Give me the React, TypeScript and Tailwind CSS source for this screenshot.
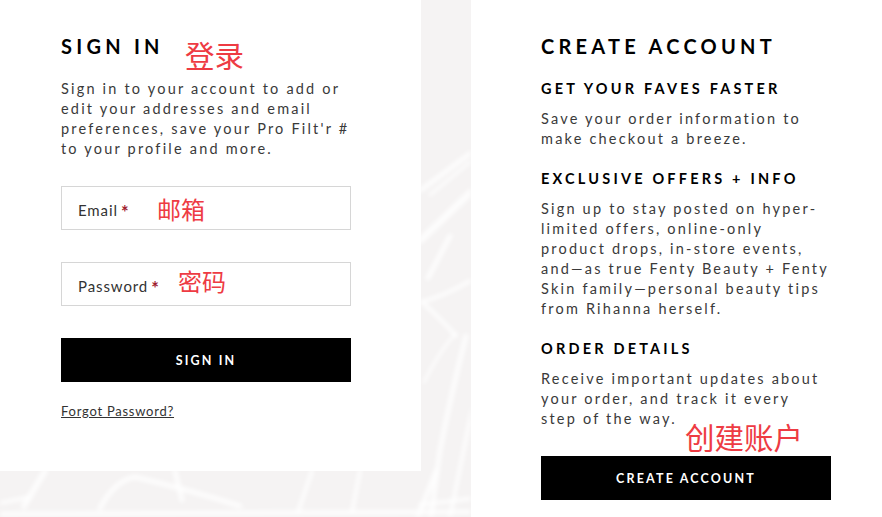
const FONT = "font-['Lato','Noto_Sans_CJK_SC',sans-serif]";

function Streaks() {
  const lines: [string, number][] = [
    ["M475 150 L421 190", 5],
    ["M475 158 L430 195", 3],
    ["M475 188 L421 240", 7],
    ["M450 236 L428 278", 5],
    ["M421 302 Q445 296 475 278", 4],
    ["M424 304 Q440 318 456 336", 4],
    ["M456 333 Q440 350 424 382", 3],
    ["M466 336 Q452 390 440 450 L431 517", 5],
    ["M475 395 L450 517", 4],
    ["M45 471 L24 506", 6],
    ["M0 503 L30 497", 4],
    ["M100 508 Q115 480 135 477 Q190 490 240 506", 5],
    ["M175 471 L182 500", 5],
    ["M312 471 L298 512", 4],
    ["M360 471 L352 512", 4],
    ["M436 471 L418 517", 5],
    ["M0 514 L475 512", 5],
    ["M420 505 L475 498", 4],
  ];
  return (
    <svg className="absolute left-0 top-0 h-[517px] w-[471px] blur-[2px]" viewBox="0 0 471 517" aria-hidden="true">
      {lines.map(([d, w], i) => (
        <path key={i} d={d} fill="none" stroke="#ffffff" strokeWidth={w} strokeLinecap="round" opacity={0.8} />
      ))}
    </svg>
  );
}

function Body({ children, className = "" }: { children: React.ReactNode; className?: string }) {
  return <p className={`text-[14.5px] leading-[20px] tracking-[2.2px] text-[#3a3a3a] ${className}`}>{children}</p>;
}

function Sub({ children }: { children: React.ReactNode }) {
  return <h3 className="text-[14.5px] font-bold leading-[20px] tracking-[3.2px] text-black">{children}</h3>;
}

function Field({ label }: { label: string }) {
  return (
    <div className="flex h-[44px] w-[290px] items-center border border-[#d6d6d6] bg-white pl-4 pt-1 text-[15px] tracking-[0.9px] text-[#333]">
      {label}
      <span className="ml-[3px] translate-y-[2px] text-[18px] font-bold text-[#a01c30]">*</span>
    </div>
  );
}

function Note({ children, className }: { children: React.ReactNode; className: string }) {
  return <span className={`absolute whitespace-nowrap leading-none text-[#ee3b43] ${className}`}>{children}</span>;
}

function Button({ children }: { children: React.ReactNode }) {
  return (
    <button className="flex h-[44px] w-[290px] items-center justify-center bg-black pt-[3px] text-[12.5px] font-bold tracking-[2.15px] text-white">
      {children}
    </button>
  );
}

export default function App() {
  return (
    <div className={`relative h-[517px] w-[882px] overflow-hidden bg-[#f5f3f3] ${FONT}`}>
      <Streaks />
      <div className="relative flex h-full">
        <main className="h-[471px] w-[421px] bg-white pl-[61px] pt-[33px]">
          <h2 className="text-[20px] font-bold leading-[26px] tracking-[4.25px] text-black">SIGN IN</h2>
          <Body className="mt-[20px] w-[300px]">
            Sign in to your account to add or
            <br />
            edit your addresses and email
            <br />
            preferences, save your Pro Filt'r #
            <br />
            to your profile and more.
          </Body>
          <div className="mt-[27px] flex flex-col gap-8">
            <Field label="Email" />
            <Field label="Password" />
          </div>
          <div className="mt-8">
            <Button>SIGN IN</Button>
          </div>
          <a className="mt-[21px] block w-fit text-[13px] leading-[16px] tracking-[0.75px] text-[#333] underline">
            Forgot Password?
          </a>
        </main>
        <div className="w-[50px]" />
        <aside className="h-full flex-1 bg-white pl-[70px] pt-[33px]">
          <h2 className="text-[20px] font-bold leading-[26px] tracking-[4.25px] text-black">CREATE ACCOUNT</h2>
          <div className="mt-[20px]">
            <Sub>GET YOUR FAVES FASTER</Sub>
            <Body className="mt-[10px]">
              Save your order information to
              <br />
              make checkout a breeze.
            </Body>
          </div>
          <div className="mt-[20px]">
            <Sub>EXCLUSIVE OFFERS + INFO</Sub>
            <Body className="mt-[10px]">
              Sign up to stay posted on hyper-
              <br />
              limited offers, online-only
              <br />
              product drops, in-store events,
              <br />
              and—as true Fenty Beauty + Fenty
              <br />
              Skin family—personal beauty tips
              <br />
              from Rihanna herself.
            </Body>
          </div>
          <div className="mt-[20px]">
            <Sub>ORDER DETAILS</Sub>
            <Body className="mt-[10px]">
              Receive important updates about
              <br />
              your order, and track it every
              <br />
              step of the way.
            </Body>
          </div>
          <div className="mt-[27px]">
            <Button>CREATE ACCOUNT</Button>
          </div>
        </aside>
      </div>
      <Note className="left-[185px] top-[41px] text-[29.5px]">登录</Note>
      <Note className="left-[157px] top-[198px] text-[24px]">邮箱</Note>
      <Note className="left-[178px] top-[270px] text-[24px]">密码</Note>
      <Note className="left-[685px] top-[423px] text-[29.5px]">创建账户</Note>
    </div>
  );
}
